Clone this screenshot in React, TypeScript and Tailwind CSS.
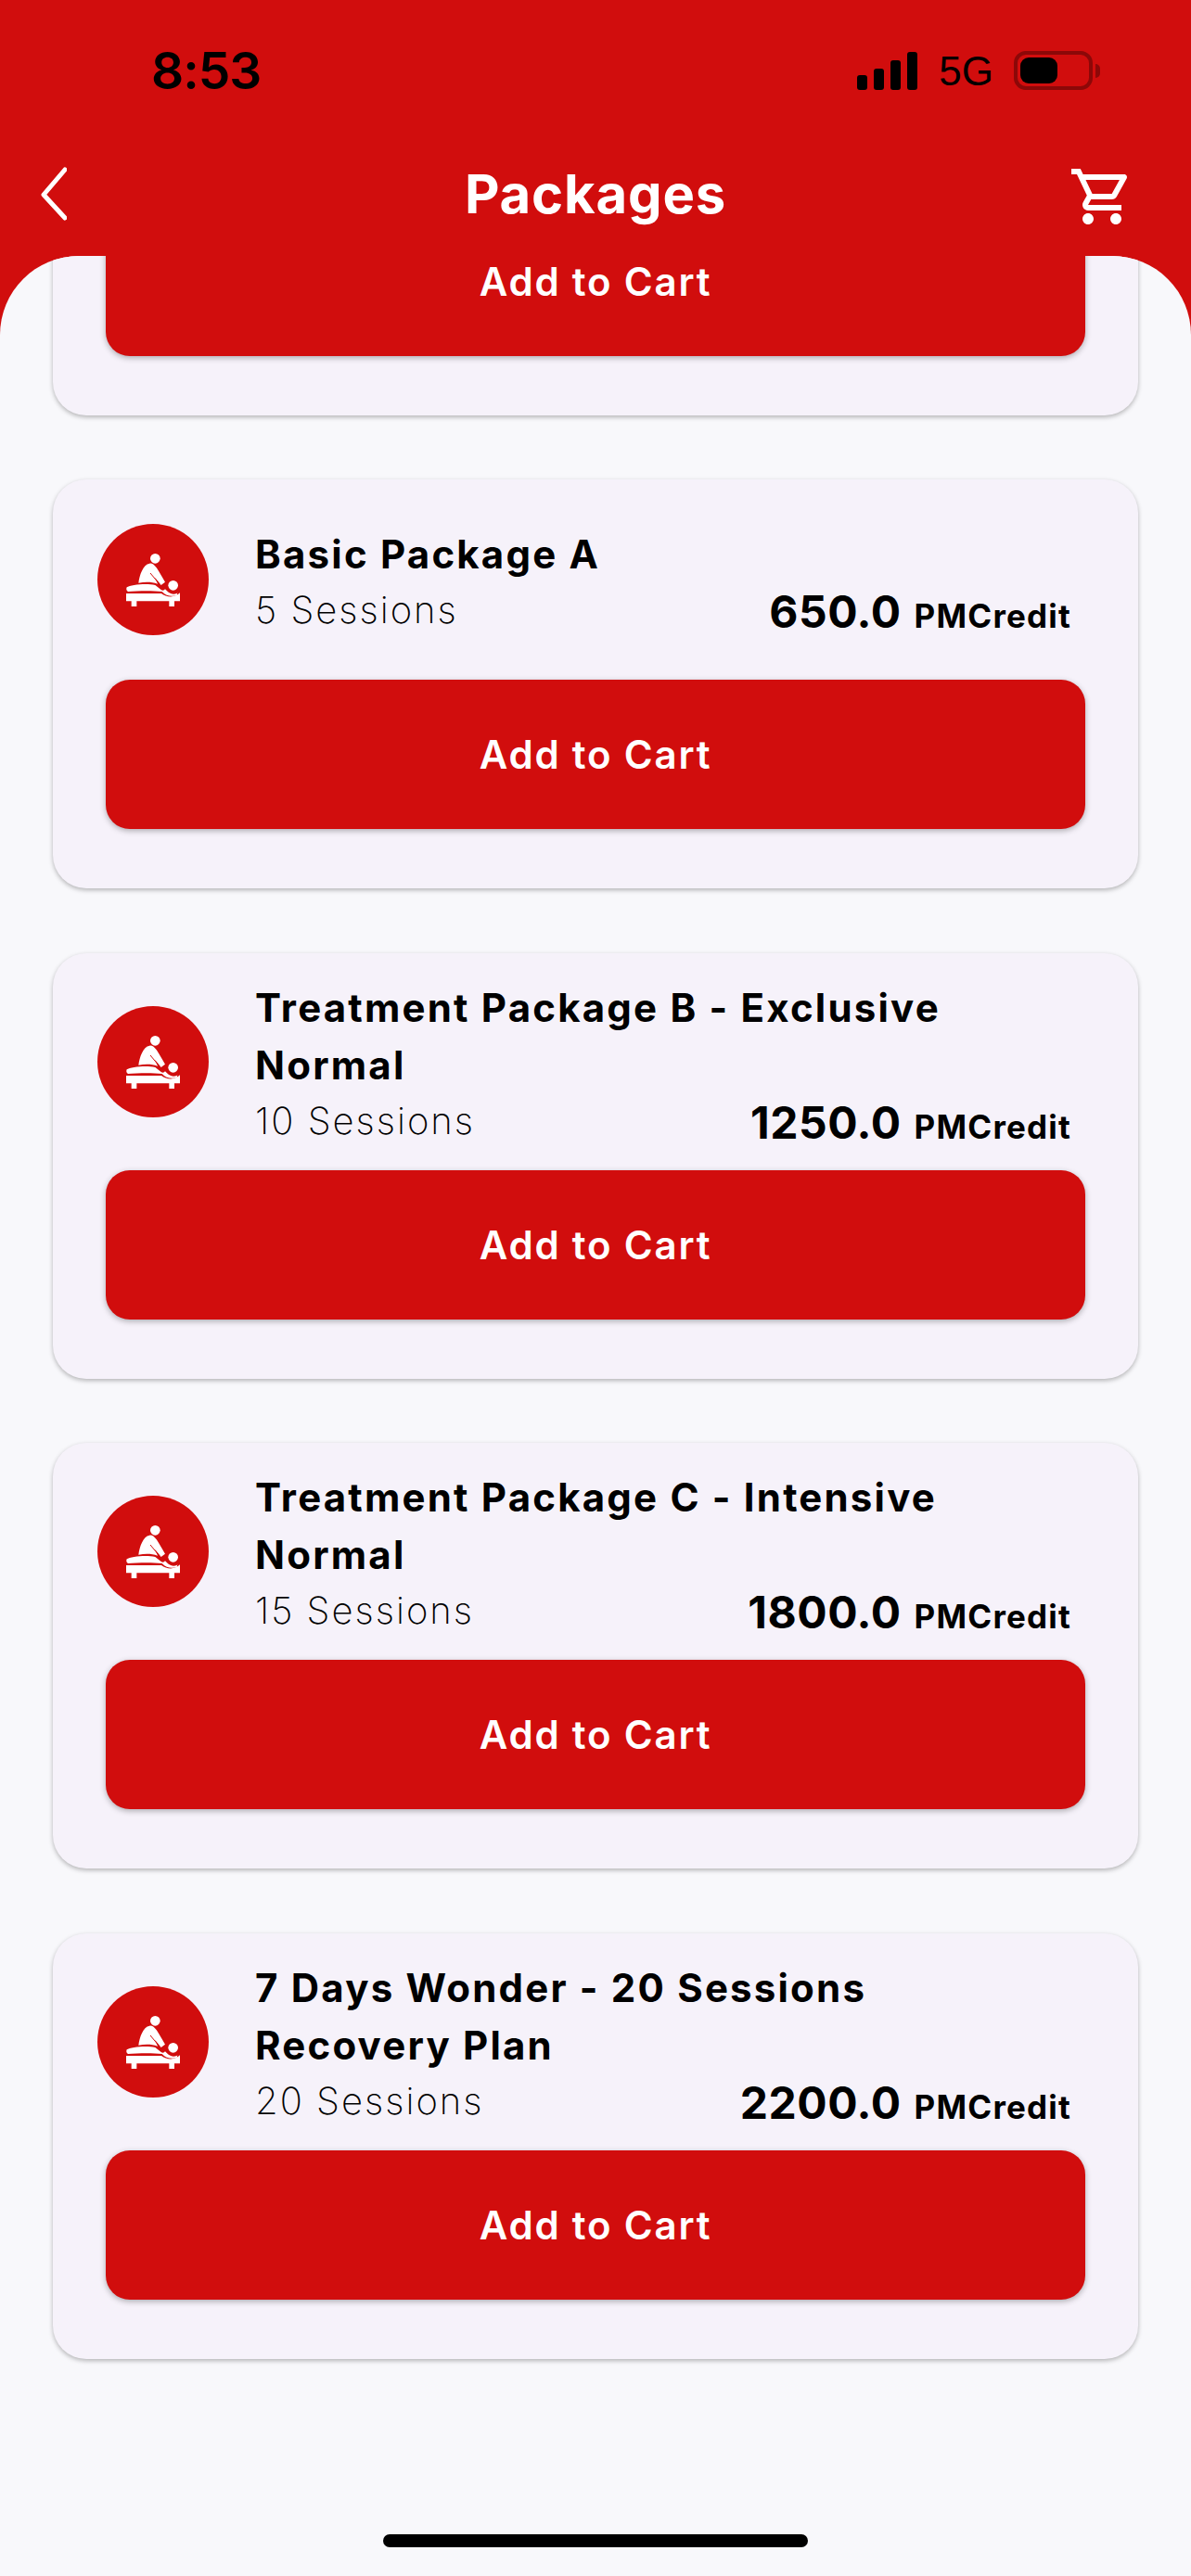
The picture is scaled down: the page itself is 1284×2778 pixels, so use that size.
const sans = "font-['Inter','Liberation_Sans',sans-serif]";

const packages = [
  { title: ["Basic Package A"], sessions: "5 Sessions", price: "650.0" },
  { title: ["Treatment Package B - Exclusive", "Normal"], sessions: "10 Sessions", price: "1250.0" },
  { title: ["Treatment Package C - Intensive", "Normal"], sessions: "15 Sessions", price: "1800.0" },
  { title: ["7 Days Wonder - 20 Sessions", "Recovery Plan"], sessions: "20 Sessions", price: "2200.0" },
];

function MassageIcon() {
  return (
    <svg viewBox="45 45 360 360" className="h-full w-full" fill="#ffffff">
      <circle cx="232" cy="157" r="16" />
      <path d="M178 236C181 212 192 176 214 173C230 171 240 192 264 233L251 243L231 218L240 239C220 232 200 232 178 236Z" />
      <path d="M216 204L246 240" fill="none" stroke="#d10d0d" strokeWidth="3" />
      <path d="M140 250C152 243 200 236 232 243L250 257C256 262 260 261 264 256L270 262C280 272 296 276 304 268L302 276C288 280 268 280 254 264C220 260 170 262 144 264C138 262 138 254 140 250Z" />
      <circle cx="290" cy="244" r="16" />
      <path d="M138 270H252C270 284 296 284 312 268V295H294V312H277V295H172V312H155V295H138Z" />
    </svg>
  );
}

function CartIcon() {
  return (
    <svg viewBox="0 0 24 24" className="h-[72px] w-[72px]" fill="#ffffff">
      <path d="M15.55 13c.75 0 1.41-.41 1.75-1.03l3.58-6.49c.37-.66-.11-1.48-.87-1.48H5.21l-.94-2H1v2h2l3.6 7.59-1.35 2.44C4.52 15.37 5.48 17 7 17h12v-2H7l1.1-2h7.45zM6.16 6h12.15l-2.76 5H8.53L6.16 6zM7 18c-1.1 0-1.99.9-1.99 2S5.9 22 7 22s2-.9 2-2-.9-2-2-2zm10 0c-1.1 0-1.99.9-1.99 2s.89 2 1.99 2 2-.9 2-2-.9-2-2-2z" />
    </svg>
  );
}

function StatusBar() {
  return (
    <div className="flex h-[152px] items-start justify-between pl-[163px] pr-[98px] pt-[39px] text-black">
      <span className="font-['Inter',sans-serif] text-[55px] font-semibold leading-[75px] tracking-[-1px]">8:53</span>
      <div className="flex items-center pt-[15px]">
        <div className="flex items-end gap-[7px]">
          <div className="h-[16px] w-[11px] rounded-[3px] bg-black" />
          <div className="h-[23px] w-[11px] rounded-[3px] bg-black" />
          <div className="h-[32px] w-[11px] rounded-[3px] bg-black" />
          <div className="h-[41px] w-[11px] rounded-[3px] bg-black" />
        </div>
        <span className="ml-[23px] mt-[2px] font-['Liberation_Sans',sans-serif] text-[44px] leading-[42px]">5G</span>
        <div className="ml-[22px] flex h-[42px] w-[85px] items-center rounded-[13px] border-[4px] border-[#8c0808] pl-[3px]">
          <div className="h-[28px] w-[40px] rounded-[9px] bg-black" />
        </div>
        <div className="ml-[3px] h-[15px] w-[5px] rounded-r-full bg-[#8c0808]" />
      </div>
    </div>
  );
}

function Header() {
  return (
    <div className="grid h-[124px] grid-cols-[132px_1fr_132px] items-start pt-[24px]">
      <svg viewBox="0 0 36 60" className="ml-[36px] mt-[2px] h-[60px] w-[36px]" fill="none" stroke="#ffffff" strokeWidth="5" strokeLinecap="round" strokeLinejoin="round">
        <path d="M34 5L11 32L34 57" />
      </svg>
      <h1 className={`${sans} -mt-[5px] text-center text-[58px] font-bold leading-[76px] tracking-[0.8px] text-white`}>Packages</h1>
      <CartIcon />
    </div>
  );
}

function AddToCart() {
  return (
    <button className="mx-[57px] flex h-[161px] w-[calc(100%-114px)] items-center justify-center rounded-[26px] bg-[#d10d0d] text-[42px] font-semibold tracking-[1.8px] text-white shadow-[0_2px_6px_rgba(0,0,0,0.3)]">
      Add to Cart
    </button>
  );
}

function PackageCard({ item }: { item: (typeof packages)[number] }) {
  return (
    <div className="mx-[57px] rounded-[36px] bg-[#f6f2fa] pb-[64px] shadow-[0_2px_5px_rgba(0,0,0,0.28)]">
      <div className="flex min-h-[216px] items-center py-[28px] pl-[48px] pr-[72px]">
        <div className="h-[120px] w-[120px] shrink-0 rounded-full bg-[#d10d0d]">
          <MassageIcon />
        </div>
        <div className="ml-[50px] flex-1">
          {item.title.map((line) => (
            <div key={line} className="text-[42px] font-bold leading-[62px] tracking-[2.2px] text-black">{line}</div>
          ))}
          <div className="flex h-[54.25px] items-center justify-between pt-[4px]">
            <span className="text-[40px] font-extralight tracking-[2px] text-black">{item.sessions}</span>
            <span className="flex items-baseline pt-[4px]">
              <span className="text-[48px] font-bold tracking-[0.5px] text-black">{item.price}</span>
              <span className="ml-[14px] text-[35px] font-bold tracking-[1.2px] text-black">PMCredit</span>
            </span>
          </div>
        </div>
      </div>
      <AddToCart />
    </div>
  );
}

// Card scrolled mostly out of view under the header: only its button still shows.
function ScrolledCard() {
  return (
    <div className="-mt-[269px] mx-[57px] rounded-[36px] bg-[#f6f2fa] pb-[64px] pt-[216px] shadow-[0_2px_5px_rgba(0,0,0,0.28)]">
      <AddToCart />
    </div>
  );
}

export default function App() {
  return (
    <div className={`${sans} flex h-[2778px] w-[1284px] flex-col overflow-hidden bg-[#d10d0d]`}>
      <StatusBar />
      <Header />
      <main className="flex flex-1 flex-col overflow-hidden rounded-t-[85px] bg-[#f8f8fb]">
        <div className="flex flex-col gap-[69.3px]">
          <ScrolledCard />
          {packages.map((item) => (
            <PackageCard key={item.sessions} item={item} />
          ))}
        </div>
        <div className="mt-auto mb-[31px] h-[14px] w-[458px] self-center rounded-full bg-black" />
      </main>
    </div>
  );
}
